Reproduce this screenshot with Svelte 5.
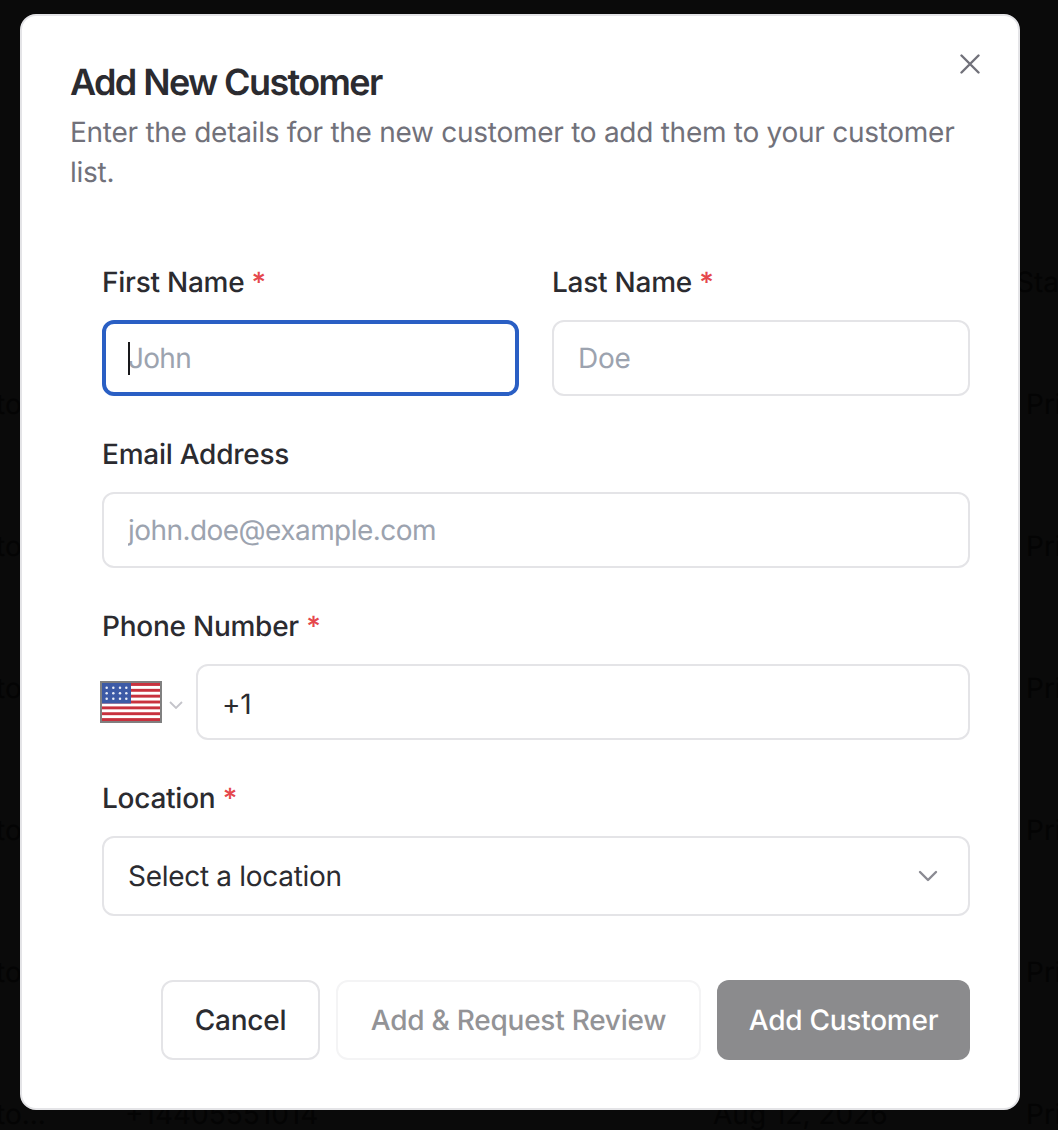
<script>
  const rows = [
    { left: 'to...', phone: '', date: '', right: 'Pri' },
    { left: 'to...', phone: '', date: '', right: 'Pri' },
    { left: 'to...', phone: '', date: '', right: 'Pri' },
    { left: 'to...', phone: '', date: '', right: 'Pri' },
    { left: 'to...', phone: '', date: '', right: 'Pri' },
    { left: 'to...', phone: '+14405551014', date: 'Aug 12, 2026', right: 'Pri' }
  ];
  const stripes = [0, 1, 2, 3, 4, 5, 6];
  const starX = [106.7, 113.3, 120, 126.3];
  const starY = [687.7, 693.3, 698.7];
</script>

<div class="page">
  <div class="backdrop" aria-hidden="true">
    <div class="head-row"><span class="sta">Stat</span></div>
    {#each rows as row}
      <div class="bg-row">
        <span class="bg-left">{row.left}</span>
        <span class="bg-phone">{row.phone}</span>
        <span class="bg-date">{row.date}</span>
        <span class="bg-right">{row.right}</span>
      </div>
    {/each}
  </div>

  <div class="modal" role="dialog" aria-label="Add New Customer">
    <button class="close" aria-label="Close">
      <svg viewBox="0 0 20 20" width="20" height="20" fill="none" stroke="#71717a" stroke-width="2.4" stroke-linecap="round">
        <path d="M1.5 1.5 18.5 18.5M18.5 1.5 1.5 18.5" />
      </svg>
    </button>

    <h1>Add New Customer</h1>
    <p class="sub">Enter the details for the new customer to add them to your customer list.</p>

    <form class="form">
      <div class="two">
        <div class="field">
          <span class="label">First Name <i>*</i></span>
          <div class="input-wrap">
            <input class="input focused" placeholder="John" />
            <span class="caret"></span>
          </div>
        </div>
        <div class="field">
          <span class="label">Last Name <i>*</i></span>
          <input class="input" placeholder="Doe" />
        </div>
      </div>

      <div class="field">
        <span class="label">Email Address</span>
        <input class="input email" placeholder="john.doe@example.com" />
      </div>

      <div class="field">
        <span class="label">Phone Number <i>*</i></span>
        <div class="phone">
          <div class="country">
            <svg class="flag" viewBox="100 681 62 42" width="62" height="42">
              <rect x="100" y="681" width="62" height="42" fill="#808080" />
              <rect x="102" y="683" width="58" height="38" fill="#fff" />
              {#each stripes as s}
                <rect x="102" y={683 + s * 5.85} width="58" height="2.92" fill="#c8313e" />
              {/each}
              <rect x="102" y="683" width="29" height="20.5" fill="#3c5aa6" />
              {#each starY as y}
                {#each starX as x}
                  <circle cx={x} cy={y} r="1.25" fill="#e8ecf6" />
                {/each}
              {/each}
            </svg>
            <svg class="mini-chev" viewBox="0 0 14 8" width="14" height="8" fill="none" stroke="#c4c4ca" stroke-width="1.8">
              <path d="M1 1l6 6 6-6" />
            </svg>
          </div>
          <input class="input dial" value="+1" />
        </div>
      </div>

      <div class="field">
        <span class="label">Location <i>*</i></span>
        <div class="select">
          <span>Select a location</span>
          <svg viewBox="0 0 20 12" width="20" height="12" fill="none" stroke="#8a8a92" stroke-width="2.4" stroke-linecap="round" stroke-linejoin="round">
            <path d="M2 2l8 8 8-8" />
          </svg>
        </div>
      </div>

      <div class="actions">
        <button type="button" class="btn cancel">Cancel</button>
        <button type="button" class="btn review">Add &amp; Request Review</button>
        <button type="button" class="btn add">Add Customer</button>
      </div>
    </form>
  </div>
</div>

<style>
  :global(body) {
    margin: 0;
    background: #0a0a0a;
  }
  .page {
    position: relative;
    width: 1058px;
    height: 1130px;
    overflow: hidden;
    background: #0a0a0a;
    font-family: Inter, "Liberation Sans", sans-serif;
    color: #27272a;
    text-rendering: geometricPrecision;
  }
  .backdrop {
    color: #040404;
    font-size: 28px;
    line-height: 40px;
    white-space: nowrap;
  }
  .head-row {
    height: 333px;
    position: relative;
  }
  .sta {
    position: absolute;
    left: 1016px;
    top: 262px;
  }
  .bg-row {
    height: 142px;
    position: relative;
  }
  .bg-row span {
    position: absolute;
    top: 51px;
  }
  .bg-left { left: -4px; }
  .bg-phone { left: 125px; }
  .bg-date { left: 713px; }
  .bg-right { left: 1026px; }

  .modal {
    position: absolute;
    left: 20px;
    top: 14px;
    width: 1000px;
    height: 1096px;
    box-sizing: border-box;
    padding: 46px 48px 0 48px;
    background: #fff;
    border: 2px solid #e4e4e7;
    border-radius: 16px;
  }
  .close {
    position: absolute;
    right: 38px;
    top: 38px;
    padding: 0;
    border: 0;
    background: none;
    width: 20px;
    height: 20px;
    display: flex;
  }
  h1 {
    margin: 0;
    font-size: 36px;
    line-height: 40px;
    font-weight: 600;
    letter-spacing: -1.62px;
    color: #2b2b30;
  }
  .sub {
    margin: 10px 0 0;
    font-size: 28px;
    line-height: 40px;
    letter-spacing: -0.27px;
    color: #71717a;
  }
  .form {
    margin-top: 70px;
    padding-left: 32px;
    display: flex;
    flex-direction: column;
    gap: 38px;
  }
  .two {
    display: grid;
    grid-template-columns: 417px 418px;
    gap: 33px;
  }
  .field {
    display: flex;
    flex-direction: column;
    gap: 18px;
    min-width: 0;
  }
  .label {
    font-size: 28px;
    line-height: 40px;
    font-weight: 500;
    letter-spacing: -0.25px;
    color: #2b2b30;
  }
  .label i {
    font-style: normal;
    color: #e5484d;
  }
  .input-wrap {
    position: relative;
    display: flex;
  }
  .input {
    width: 100%;
    height: 76px;
    box-sizing: border-box;
    padding: 0 24px;
    border: 2px solid #e4e4e7;
    border-radius: 12px;
    background: #fff;
    font: 400 28px/40px Inter, "Liberation Sans", sans-serif;
    letter-spacing: -0.3px;
    color: #2b2b30;
    outline: none;
    text-rendering: geometricPrecision;
  }
  .input.email {
    letter-spacing: -0.55px;
  }
  .input::placeholder {
    color: #9ca3af;
    opacity: 1;
  }
  .input.focused {
    border: 4px solid #2a5fc4;
    padding: 0 22px;
    letter-spacing: -0.7px;
  }
  .dial {
    flex: 1;
    min-width: 0;
    padding-top: 3px;
  }
  .caret {
    position: absolute;
    left: 26px;
    top: 22px;
    width: 2px;
    height: 33px;
    background: #18181b;
  }
  .phone {
    display: flex;
    align-items: center;
  }
  .country {
    display: flex;
    align-items: center;
    width: 96px;
    margin-left: -2px;
    flex: none;
    gap: 7px;
  }
  .flag {
    display: block;
    flex: none;
  }
  .mini-chev {
    display: block;
    flex: none;
    margin-top: 5px;
  }
  .select {
    height: 80px;
    box-sizing: border-box;
    padding: 0 30px 0 24px;
    border: 2px solid #e4e4e7;
    border-radius: 12px;
    display: flex;
    align-items: center;
    justify-content: space-between;
    font-size: 28px;
    letter-spacing: -0.3px;
    color: #2b2b30;
  }
  .actions {
    display: flex;
    justify-content: flex-end;
    gap: 16px;
    margin-top: 26px;
  }
  .btn {
    height: 80px;
    box-sizing: border-box;
    border-radius: 12px;
    font: 500 28px/40px Inter, "Liberation Sans", sans-serif;
    letter-spacing: -0.25px;
    padding: 0 32px;
    background: #fff;
    text-rendering: geometricPrecision;
  }
  .cancel {
    width: 159px;
    padding: 0;
    border: 2px solid #e4e4e7;
    color: #2b2b30;
  }
  .review {
    width: 365px;
    padding: 0;
    border: 2px solid #f4f4f5;
    color: #939396;
  }
  .add {
    width: 253px;
    padding: 0;
    border: 0;
    background: #8b8b8d;
    color: #fff;
  }
</style>
